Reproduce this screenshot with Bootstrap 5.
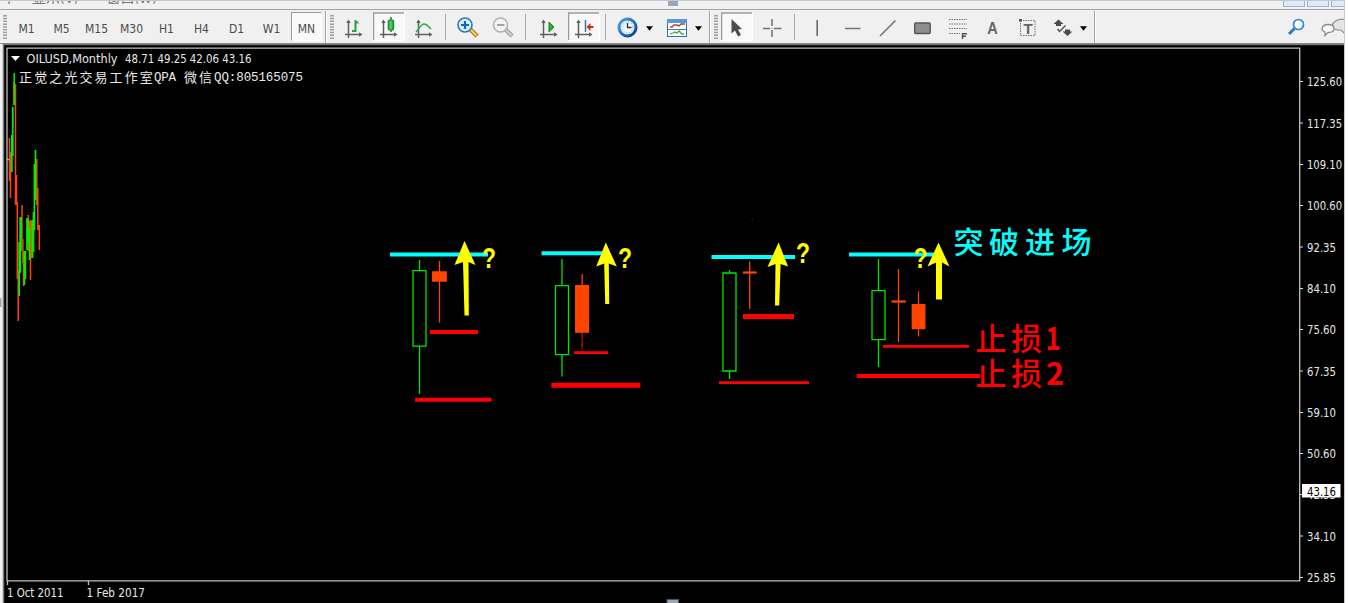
<!DOCTYPE html>
<html lang="zh-CN">
<head>
<meta charset="utf-8">
<meta name="viewport" content="width=device-width, initial-scale=1">
<title>OILUSD, Monthly</title>
<link href="https://cdn.jsdelivr.net/npm/bootstrap@5.3.0/dist/css/bootstrap.min.css" rel="stylesheet">
<style>
body{background:#fff;font-family:"DejaVu Sans Condensed","Noto Sans CJK SC",sans-serif;font-size:11px;height:603px}
.app-window{width:1345px;height:603px;border-right:1px solid #c9c9c9;background:#f0f0f0}
.title-strip{height:10px;border-bottom:1px solid #a5a5a5;border-top:1px solid #c6c7cf;background:#f1f1f1}
.menu-tail{height:3px;width:300px;padding-left:7px;gap:28px;color:#77777c;line-height:14px;font-size:14px}
.menu-tail span{margin-top:-10px}
.split-knob{width:10px;height:5px;background:#9aa7b3;left:668px;top:0}
.mdi-btn{width:22px;height:6px;background:#dcebfa;border:1px solid #9db4cc;border-top:0}
.toolbar-row{height:33px;background:#f0f0f0}
.toolbar-row svg{display:block;flex:none}
.tf{width:35px;height:33px;padding:2px;flex:none;color:#4b4b4b;font:12px/1 "DejaVu Sans Condensed","Noto Sans",sans-serif}
.tf span{width:31px;height:29px;padding-top:4px}
.tf .pressed{background:#f9f9f9;border:1px solid #fff;border-top-color:#9b9b9b;border-left-color:#9b9b9b}
.chart-area{height:560px;background:#000}
.chart-area svg{display:block}
.axis-text{font:12px "DejaVu Sans Condensed","Noto Sans",sans-serif;fill:#e8e8e8}
.note-text{font:500 31px "Noto Sans CJK SC",sans-serif}
.ask{font:bold 30px "Liberation Sans Narrow","Liberation Sans",sans-serif;fill:#ff0}
.up{stroke:#00e600;fill:none}
.down{stroke:#ff4500;fill:#ff4500}
</style>
</head>
<body>
<svg width="0" height="0" class="position-absolute">
<defs>
<linearGradient id="blueRing" x1="0" y1="0" x2="1" y2="1"><stop offset="0" stop-color="#4da3ee"/><stop offset="1" stop-color="#063c92"/></linearGradient>
<linearGradient id="greenBody"><stop offset="0" stop-color="#1f9a31"/><stop offset=".5" stop-color="#5ed26d"/><stop offset="1" stop-color="#128420"/></linearGradient>
<symbol id="pressed" viewBox="0 0 32 29"><path d="M0 0h32v29H0z" fill="#f9f9f9"/><path d="M.5 28V1H31" fill="none" stroke="#9b9b9b" stroke-width="1.500"/><path d="M1 28.500h30.500V1" fill="none" stroke="#fff"/></symbol>
<symbol id="axes" viewBox="0 0 18 20"><path d="M3.500 2v17M0 15.500h16" stroke="#5c615e" stroke-width="1.500"/><path d="M3.500 0.500l-2.200 3.500h4.400zM17.500 15.500l-3.500-2.200v4.400z" fill="#5c615e"/></symbol>
<symbol id="grip" viewBox="0 0 5 25"><path d="M2 0v25" stroke="#a0a0a0" stroke-width="4" stroke-dasharray="1.500 1.300"/></symbol>
<symbol id="caret" viewBox="0 0 6 4"><path d="M0 0h6L3 4z"/></symbol>
</defs>
</svg>
<div class="app-window overflow-hidden">
  <header class="title-strip d-flex justify-content-between position-relative">
    <div class="menu-tail d-flex overflow-hidden text-nowrap"><span>,</span><span style="margin-left:-7px">显示(V)</span><span>窗口(W)</span></div>
    <i class="split-knob position-absolute"></i>
    <div class="d-flex gap-1 overflow-hidden" style="width:61px"><i class="mdi-btn flex-shrink-0"></i><i class="mdi-btn flex-shrink-0" style="margin-left:-2px"></i><i class="mdi-btn flex-shrink-0" style="margin-left:-2px"></i></div>
  </header>
  <nav class="toolbar-row d-flex">
    <svg width="9" height="33" viewBox="0 10 9 33"><use href="#grip" x="3" y="15" width="5" height="25"/></svg>
    <div class="tf"><span class="d-flex align-items-center justify-content-center">M1</span></div>
    <div class="tf"><span class="d-flex align-items-center justify-content-center">M5</span></div>
    <div class="tf"><span class="d-flex align-items-center justify-content-center">M15</span></div>
    <div class="tf"><span class="d-flex align-items-center justify-content-center">M30</span></div>
    <div class="tf"><span class="d-flex align-items-center justify-content-center">H1</span></div>
    <div class="tf"><span class="d-flex align-items-center justify-content-center">H4</span></div>
    <div class="tf"><span class="d-flex align-items-center justify-content-center">D1</span></div>
    <div class="tf"><span class="d-flex align-items-center justify-content-center">W1</span></div>
    <div class="tf"><span class="pressed d-flex align-items-center justify-content-center">MN</span></div>
    <svg width="12" height="33" viewBox="324 10 12 33"><path d="M325.500 11v32" stroke="#a0a0a0"/><path d="M326.500 11v32" stroke="#fff"/><use href="#grip" x="330" y="15" width="5" height="25"/></svg>
    <!-- chart types -->
    <svg width="35" height="33" viewBox="336 10 35 33"><use href="#axes" x="345" y="19" width="18" height="20"/><path d="M352 31h3.500v-11M355.500 22.500h3" fill="none" stroke="#22a43c" stroke-width="2"/></svg>
    <svg width="35" height="33" viewBox="371 10 35 33"><use href="#pressed" x="373" y="12" width="32" height="29"/><use href="#axes" x="380" y="19" width="18" height="20"/><path d="M391 17v15" stroke="#15852a" stroke-width="1.500"/><rect x="388.200" y="20" width="5.500" height="10" rx="1" fill="url(#greenBody)" stroke="#13822a"/></svg>
    <svg width="35" height="33" viewBox="406 10 35 33"><use href="#axes" x="415" y="19" width="18" height="20"/><path d="M416 32c3-3 5-8 8-8s4 2 7 5" fill="none" stroke="#35a84b" stroke-width="1.500"/></svg>
    <svg width="9" height="33" viewBox="441 10 9 33"><path d="M445.500 14v26" stroke="#a8a8a8"/></svg>
    <!-- zoom -->
    <svg width="35" height="33" viewBox="450 10 35 33"><path d="M470 29l7 7" stroke="#a96a12" stroke-width="4.500"/><path d="M470.500 29.500l6 6" stroke="#f4c650" stroke-width="2.500"/><circle cx="465" cy="25" r="7" fill="#d5efff" stroke="#2678bc" stroke-width="1.600"/><path d="M461 25h8M465 21v8" stroke="#1c64a8" stroke-width="2.200"/></svg>
    <svg width="35" height="33" viewBox="485 10 35 33"><path d="M505 29l7 7" stroke="#9b9b9b" stroke-width="4.200"/><path d="M505.500 29.500l6 6" stroke="#d1d1d1" stroke-width="2"/><circle cx="500.500" cy="25" r="7" fill="#f3f3f3" stroke="#b1b1b1" stroke-width="1.500"/><path d="M497 25h7.500" stroke="#a2a2a2" stroke-width="2"/></svg>
    <svg width="11" height="33" viewBox="520 10 11 33"><path d="M525.500 14v26" stroke="#a8a8a8"/></svg>
    <svg width="35" height="33" viewBox="531 10 35 33"><use href="#axes" x="540" y="19" width="18" height="20"/><path d="M549 22l5 5-5 5z" fill="#28ae40" stroke="#168329"/></svg>
    <svg width="35" height="33" viewBox="566 10 35 33"><use href="#pressed" x="568" y="12" width="32" height="29"/><use href="#axes" x="575" y="19" width="18" height="20"/><path d="M585.500 20v12" stroke="#3475b5" stroke-width="1.500"/><path d="M586.500 27l4-4v3h3v2h-3v3z" fill="#c83216"/></svg>
    <svg width="9" height="33" viewBox="601 10 9 33"><path d="M605.500 14v26" stroke="#a8a8a8"/></svg>
    <!-- periods and templates -->
    <svg width="33" height="33" viewBox="610 10 33 33"><circle cx="627.500" cy="27.500" r="8.500" fill="#edf6fd" stroke="url(#blueRing)" stroke-width="3"/><circle cx="627.500" cy="27.500" r="5.500" fill="none" stroke="#82909d" stroke-dasharray="1 1.880"/><path d="M627.500 23v4.500h4" fill="none" stroke="#30353a" stroke-width="1.300"/></svg>
    <svg width="13" height="33" viewBox="643 10 13 33"><use href="#caret" x="646" y="26" width="7" height="5"/></svg>
    <svg width="36" height="33" viewBox="656 10 36 33"><rect x="667.500" y="19.500" width="19" height="17" fill="#fff" stroke="#2e70b0"/><path d="M667 19h20v4h-20z" fill="#5798d7"/><path d="M668 29.500h18" stroke="#4a7fae"/><path d="M670 27h2l2-2h3l2 1 2-2h4" fill="none" stroke="#ad442e" stroke-width="1.400"/><path d="M670 34l3-1 2-1 2 1 2-2 3 3h2" fill="none" stroke="#35a54a" stroke-width="1.300"/></svg>
    <svg width="13" height="33" viewBox="692 10 13 33"><use href="#caret" x="695" y="26" width="7" height="5"/></svg>
    <svg width="15" height="33" viewBox="705 10 15 33"><path d="M709.500 11v32" stroke="#a0a0a0"/><path d="M710.500 11v32" stroke="#fff"/><use href="#grip" x="714" y="15" width="5" height="25"/></svg>
    <!-- pointer and drawing tools -->
    <svg width="35" height="33" viewBox="720 10 35 33"><use href="#pressed" x="721" y="12" width="32" height="29"/><path d="M731.500 19v14.500l3.500-3 3 6 3-1.500-3-5.500 4-.5z" fill="#4d4d4d"/></svg>
    <svg width="35" height="33" viewBox="755 10 35 33"><path d="M772 19v7M772 30v7M763 28.500h7M774 28.500h7.500" stroke="#707070" stroke-width="1.500"/><path d="M771.500 28.500h1" stroke="#707070"/></svg>
    <svg width="9" height="33" viewBox="790 10 9 33"><path d="M794.500 14v26" stroke="#a8a8a8"/></svg>
    <svg width="35" height="33" viewBox="799 10 35 33"><path d="M817.200 20v16" stroke="#686868" stroke-width="1.600"/></svg>
    <svg width="35" height="33" viewBox="834 10 35 33"><path d="M845 28.500h15.500" stroke="#777" stroke-width="1.500"/></svg>
    <svg width="35" height="33" viewBox="869 10 35 33"><path d="M880 36l15.500-15.500" stroke="#777" stroke-width="1.600"/></svg>
    <svg width="35" height="33" viewBox="904 10 35 33"><rect x="914.700" y="23" width="15.500" height="10.500" rx="1" fill="#8e8e8e" stroke="#555" stroke-width="1.400"/></svg>
    <svg width="35" height="33" viewBox="939 10 35 33"><path d="M949 19.500h18M949 24h18M949 28.500h18M949 33.500h11" stroke="#717171" stroke-dasharray="1.500 1"/><path d="M962.500 39v-5.300h4.500M962.500 36.300h3.500" fill="none" stroke="#505050" stroke-width="1.400"/></svg>
    <svg width="35" height="33" viewBox="974 10 35 33"><text x="992.500" y="34" text-anchor="middle" font-family="Liberation Sans" font-size="16" font-weight="bold" fill="#686868" textLength="10.500" lengthAdjust="spacingAndGlyphs">A</text></svg>
    <svg width="35" height="33" viewBox="1009 10 35 33"><path d="M1020.500 20.500h14.500v15h-14.500z" fill="none" stroke="#737373" stroke-dasharray="1.500 1"/><path d="M1019 19h3v2.500h-3z" fill="#555"/><text x="1028" y="34" text-anchor="middle" font-family="Liberation Sans" font-size="15" font-weight="bold" fill="#666">T</text></svg>
    <svg width="33" height="33" viewBox="1044 10 33 33"><path d="M1058.500 19.500l5 4.500h-2.500v2h-5v-2h-2.500zM1067.500 36l-5-4.500h2.500v-2h5v2h2.500z" fill="#4b4b4b"/><path d="M1057.500 29l2 2.500 6-6" fill="none" stroke="#555" stroke-width="1.500"/></svg>
    <svg width="13" height="33" viewBox="1077 10 13 33"><use href="#caret" x="1080" y="26" width="7" height="5"/></svg>
    <svg width="10" height="33" viewBox="1090 10 10 33"><path d="M1094.500 11v32" stroke="#a0a0a0"/><path d="M1095.500 11v32" stroke="#fff"/></svg>
    <svg class="ms-auto" width="33" height="33" viewBox="1280 10 33 33"><path d="M1294.500 28.500l-5.500 5.500" stroke="#2e7cc3" stroke-width="3"/><circle cx="1298.500" cy="24.500" r="5" fill="#f9fcff" stroke="#3285d0" stroke-width="1.700"/></svg>
    <svg width="31" height="33" viewBox="1313 10 31 33"><path d="M1332 28c-1-10 17-12 17-3 0 3-2 4-4 5l-1 3-3-3h-4z" fill="#e4e4e4" stroke="#8c8c8c" stroke-width="1.200"/><path d="M1328 24.500c8 0 8 8 0 8l-3 3v-3.500c-5-2-3-7.500 3-7.500z" fill="#fafafa" stroke="#8c8c8c" stroke-width="1.300"/></svg>
  </nav>
  <main class="chart-area">
    <svg width="1344" height="560" viewBox="0 43 1344 560">
      <path d="M0 43h1344v1H0z" fill="#8e8e8e"/><path d="M0 44h4v559H0z" fill="#f0f0f0"/><path d="M3.500 603V44.500H1344" fill="none" stroke="#777" stroke-width="1.500"/><path d="M0 298h1.500v9H0z" fill="#9aa7b3"/>
      <path d="M7 48.200H1299.700V580.800H7zM7.500 581v4M88.500 581v4M7 159.500h2" fill="none" stroke="#c0c0c0" stroke-width="1.300"/>
      <path d="M1300 81.500h3M1300 123h3M1300 164.500h3M1300 205.500h3M1300 247h3M1300 288.500h3M1300 329.500h3M1300 371h3M1300 412.500h3M1300 453.500h3M1300 494.500h3M1300 536h3M1300 577.500h3" stroke="#ddd"/>
      <!-- price history -->
      <g fill="none">
        <path d="M9.500 138v43M10.500 152v46M15.500 84v121M16.500 175v30M17.300 202v77M18.200 270v51M22 205v34M22.900 239v24M23.500 252v34M28.300 215v36M29.500 221v30M30.500 220v60M31.500 221v37M36.800 159v46M37.800 188v42M39.300 225v25" stroke="#ff4500" stroke-width="1.500"/>
        <path d="M11.800 135v37M12.800 107v49M14.200 82v23M19.200 242v54M20.200 217v56M21 217v34M24.400 251v34M25.400 251v28M27 218v32M28 219v24M29.500 228v32M32.500 220v38M33.500 212v40M34.400 164v66M35.500 150v50" stroke="#00f000" stroke-width="1.700"/>
        <path d="M14.200 73v32" stroke="#00f000" stroke-width="1.500"/>
      </g>
      <!-- breakout levels -->
      <g stroke="#0ff" stroke-width="4"><path d="M390 254.500h98M541.500 253.300h63M711.500 257h83.500M849 254.500h85"/></g>
      <!-- stop levels -->
      <g stroke="#f00"><path d="M430 332h48" stroke-width="4"/><path d="M415 399.700h76.500" stroke-width="4"/><path d="M574 352.700h34" stroke-width="2.700"/><path d="M551.300 385.200h89" stroke-width="5"/><path d="M743 316.500h51" stroke-width="5"/><path d="M719 382.700h90" stroke-width="2.700"/><path d="M883 346.400h86" stroke-width="2.700"/><path d="M856.700 376h123.500" stroke-width="4"/></g>
      <!-- candles -->
      <g class="up" stroke-width="1.300"><path d="M419.500 260v10.500M419.500 346v48M413 270.700h13v75.500h-13zM562 259v27M562 355v21.500M555.500 285.700h13v69h-13zM729.500 270v3M729.500 371v8M723 273h13v98h-13zM878.500 259v31.500M878.500 340v27M872 290.700h13v49h-13z"/></g>
      <g class="down" stroke-width="1.300"><path d="M439.500 261v61.500M432.700 272h13.500v9h-13.500zM582.200 274v58M575.700 285.700h12.700v46.500h-12.700zM749.700 261.500v47.500M743 272.500h13.500M898.500 269v73M891.700 301.500h14M918.500 291.500v45M912.300 304.700h12.500v24h-12.500z"/></g>
      <path d="M582.200 333v16" stroke="#a80000" stroke-width="1.600"/><path d="M743 272.500h13.500M891.700 301.500h14" stroke="#ff4500" stroke-width="2.200"/>
      <!-- entry arrows -->
      <g fill="#ff0"><path d="M464.500 241l11 24-7-3 .300 53.500h-4.300l-1.500-53.500-8.500 3zM605.800 242.500l11 24-8-3 .400 40.500h-4l-1-40.500-8 3zM778.600 242.500l9.500 24-7.500-2.500-1.400 41.500h-4.200l.500-41.500-8 3zM938.500 242.500l11 24-7.500-4v37h-6v-37l-8.500 4z"/></g>
      <g class="ask"><text x="482" y="267.500" textLength="14" lengthAdjust="spacingAndGlyphs">?</text><text x="618" y="267.500" textLength="14" lengthAdjust="spacingAndGlyphs">?</text><text x="796" y="262.500" textLength="14" lengthAdjust="spacingAndGlyphs">?</text><text x="913.500" y="267.500" textLength="14" lengthAdjust="spacingAndGlyphs">?</text></g>
      <g class="note-text"><text x="953.500 989 1025 1061.500" y="252.500" fill="#0ff" style="font-size:30px">突破进场</text><g fill="#f00"><text x="975.500 1011" y="350">止损</text><text x="1045.500" y="350" textLength="15" style="font:bold 31px 'Noto Sans CJK SC'" lengthAdjust="spacingAndGlyphs">1</text><text x="975.500 1011" y="385">止损</text><text x="1046" y="385" textLength="18" style="font:bold 31px 'Noto Sans CJK SC'" lengthAdjust="spacingAndGlyphs">2</text></g></g>
      <path d="M751.500 219.500h1.500" stroke="#234"/>
      <!-- captions and scales -->
      <path d="M11 56h9l-4.500 5z" fill="#fff"/>
      <g class="axis-text">
        <text x="26.500" y="62.500" textLength="91" lengthAdjust="spacingAndGlyphs">OILUSD,Monthly</text><text x="125" y="62.500" textLength="126.500" lengthAdjust="spacingAndGlyphs">48.71 49.25 42.06 43.16</text>
        <text x="19 34.300 49.300 64.400 79.500 94.600 109.600 124.700 139.800" y="81.500" style="font:13px 'Noto Sans CJK SC'">正觉之光交易工作室</text><text x="154" y="81" textLength="22" style="font:12.500px 'Liberation Mono'">QPA</text><text x="184 199" y="81.500" style="font:13px 'Noto Sans CJK SC'">微信</text><text x="214" y="81" textLength="89" style="font:12.500px 'Liberation Mono'">QQ:805165075</text>
        <g><text x="1307" y="86" textLength="35" lengthAdjust="spacingAndGlyphs">125.60</text><text x="1307" y="127.500" textLength="35" lengthAdjust="spacingAndGlyphs">117.35</text><text x="1307" y="169" textLength="35" lengthAdjust="spacingAndGlyphs">109.10</text><text x="1307" y="210" textLength="35" lengthAdjust="spacingAndGlyphs">100.60</text><text x="1307" y="251.500" textLength="29" lengthAdjust="spacingAndGlyphs">92.35</text><text x="1307" y="293" textLength="29" lengthAdjust="spacingAndGlyphs">84.10</text><text x="1307" y="334" textLength="29" lengthAdjust="spacingAndGlyphs">75.60</text><text x="1307" y="375.500" textLength="29" lengthAdjust="spacingAndGlyphs">67.35</text><text x="1307" y="417" textLength="29" lengthAdjust="spacingAndGlyphs">59.10</text><text x="1307" y="458" textLength="29" lengthAdjust="spacingAndGlyphs">50.60</text><text x="1307" y="499" textLength="29" lengthAdjust="spacingAndGlyphs">42.35</text><text x="1307" y="540.500" textLength="29" lengthAdjust="spacingAndGlyphs">34.10</text><text x="1307" y="582" textLength="29" lengthAdjust="spacingAndGlyphs">25.85</text></g>
        <rect x="1302" y="484" width="38.500" height="13.500" fill="#fff"/><text x="1307" y="495.500" textLength="29" lengthAdjust="spacingAndGlyphs" fill="#000">43.16</text>
        <text x="7" y="596.500" textLength="56.500" lengthAdjust="spacingAndGlyphs">1 Oct 2011</text><text x="86.500" y="596.500" textLength="58.500" lengthAdjust="spacingAndGlyphs">1 Feb 2017</text>
      </g>
      <rect x="667" y="599.500" width="11.500" height="5" fill="#9aa7b3" stroke="#555"/>
    </svg>
  </main>
</div>
<script src="https://cdn.jsdelivr.net/npm/bootstrap@5.3.0/dist/js/bootstrap.bundle.min.js"></script>
</body>
</html>
